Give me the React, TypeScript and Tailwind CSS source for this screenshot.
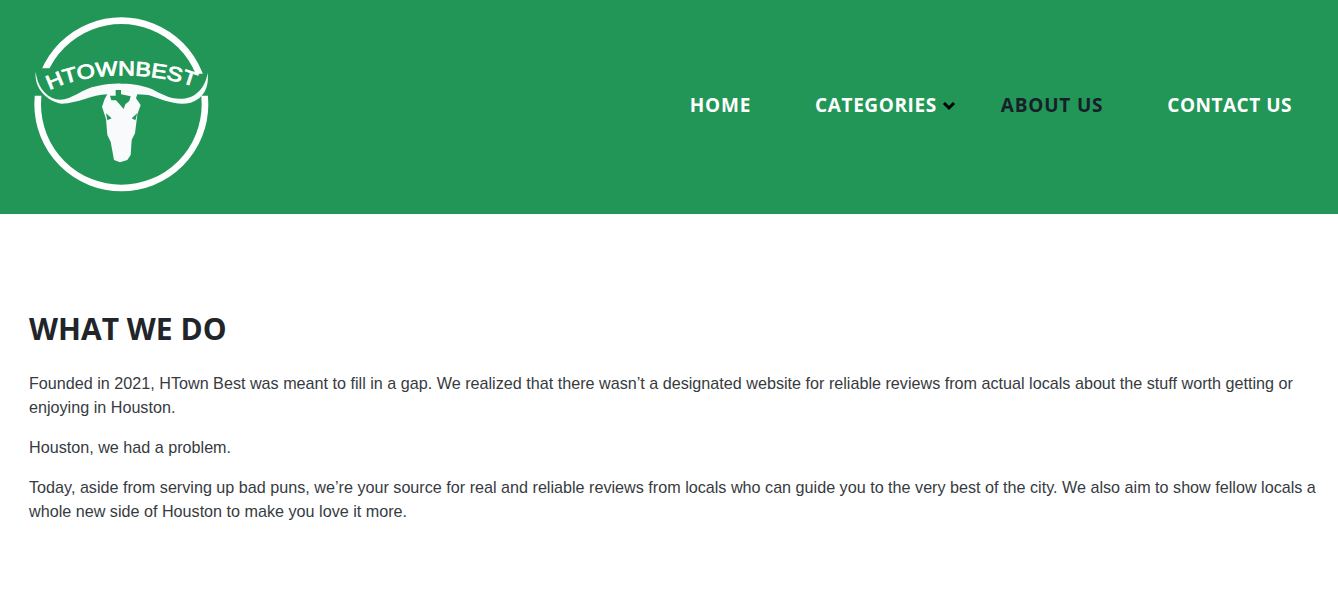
function Logo() {
  return (
    <svg width="200" height="195" viewBox="0 0 600 585" className="block">
      <circle cx="304" cy="298" r="251" fill="none" stroke="#fff" strokeWidth="20" />
      <path d="M30 190 H110 V272 H30 Z M500 206 H585 V272 H500 Z" fill="#229657" />
      <path
        d="M47 200 C52 240 72 272 108 283 C150 292 180 252 232 243 C262 237 285 235 304 236 C330 235 365 240 395 252 C430 270 465 292 512 276 C542 262 558 235 563 203 C568 245 552 280 512 293 C470 304 425 283 385 270 L352 268 L348 280 L362 300 L352 328 L350 345 L345 385 L335 405 L332 450 L322 465 L300 472 L282 465 L272 410 L262 390 L258 342 L246 305 L254 282 L262 268 C215 268 175 296 125 296 C80 288 42 250 47 200 Z"
        fill="#f8fafc"
      />
      <path d="M287 255 H303 V268 L332 274 L328 288 L316 298 L311 312 L298 297 L288 286 H274 L270 272 H287 Z" fill="#229657" />
      <path d="M258 325 L275 340 L262 346 Z M352 325 L335 340 L346 346 Z" fill="#229657" />
      <path id="arc" d="M88 256 C200 198 400 196 532 250" fill="none" />
      <text fontFamily="'Liberation Sans',sans-serif" fontSize="60" fill="#fff" stroke="#fff" strokeWidth="2.5" textLength="446" lengthAdjust="spacingAndGlyphs">
        <textPath href="#arc">HTOWNBEST</textPath>
      </text>
    </svg>
  );
}

export default function App() {
  return (
    <div className="min-h-[593px] bg-white">
      <header className="flex h-[214px] items-start justify-between bg-[#229657] pl-5 pr-[46px] pt-[5px]">
        <Logo />
        <nav className="mt-[85px] flex items-center font-['Open_Sans',sans-serif] text-[19px] font-bold leading-[30px] tracking-[0.5px] text-white">
          <a className="tracking-[0.8px]">HOME</a>
          <a className="ml-[64px] tracking-[0.6px]">CATEGORIES</a>
          <svg width="14" height="10" viewBox="0 0 14 10" className="ml-[5px] mt-[1px]">
            <path d="M2 2 L7 7 L12 2" fill="none" stroke="#000" strokeWidth="3" />
          </svg>
          <a className="ml-[45px] tracking-[0.8px] text-[#17202a]">ABOUT US</a>
          <a className="ml-[64px]">CONTACT US</a>
        </nav>
      </header>
      <main className="pl-[29px] pr-[15px] pt-[94px] font-['Liberation_Sans',Arial,sans-serif] text-[16.17px] leading-6 text-[#373b3f]">
        <h1 className="mb-[21px] font-['Open_Sans',sans-serif] text-[30px] font-bold leading-[42px] text-[#212529]">WHAT WE DO</h1>
        <p className="mb-4">Founded in 2021, HTown Best was meant to fill in a gap. We realized that there wasn’t a designated website for reliable reviews from actual locals about the stuff worth getting or enjoying in Houston.</p>
        <p className="mb-4">Houston, we had a problem.</p>
        <p>Today, aside from serving up bad puns, we’re your source for real and reliable reviews from locals who can guide you to the very best of the city. We also aim to show fellow locals a whole new side of Houston to make you love it more.</p>
      </main>
    </div>
  );
}
